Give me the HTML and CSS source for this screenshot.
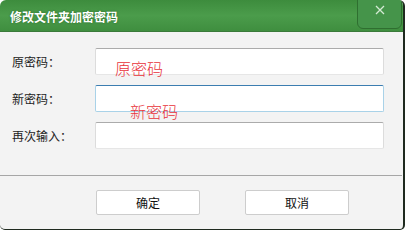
FILE: index.html
```html
<!DOCTYPE html>
<html lang="zh">
<head>
  <meta charset="UTF-8" />
  <title>修改文件夹加密密码</title>
  <link rel="stylesheet" href="styles.css">
</head>
<body>
  <div class="dialog">
    <!-- Başlık çubuğu -->
    <div class="title-bar">
      <span class="title">修改文件夹加密密码</span>
      <button class="close-btn">
        <svg width="10" height="10" viewBox="0 0 10 10">
          <path d="M1 1 L9 9 M9 1 L1 9" stroke="#d4ead4" stroke-width="1.3" fill="none"/>
        </svg>
      </button>
    </div>

    <div class="form">
      <div class="row">
        <label>原密码：</label>
        <input type="password" class="field">
      </div>
      <div class="row">
        <label>新密码：</label>
        <input type="password" class="field focus">
      </div>
      <div class="row">
        <label>再次输入：</label>
        <input type="password" class="field">
      </div>
      <!-- Kırmızı ipucu yazıları -->
      <span class="hint hint-old">原密码</span>
      <span class="hint hint-new">新密码</span>
    </div>

    <div class="separator"></div>

    <div class="buttons">
      <button class="btn">确定</button>
      <button class="btn">取消</button>
    </div>
  </div>
</body>
</html>
```

FILE: styles.css
```css
body {
  margin: 0;
  background: #ffffff;
  font-family: "Noto Sans CJK SC", "Noto Sans", sans-serif;
}
.dialog {
  width: 403px;
  height: 229px;
  background: #f3f3f3;
  border-right: 2px solid #1f2a1f;
  border-bottom: 1px solid #1f2a1f;
  border-radius: 6px 6px 5px 5px;
  overflow: hidden;
  position: relative;
}
/* Yeşil başlık */
.title-bar {
  height: 31px;
  display: flex;
  align-items: center;
  justify-content: space-between;
  background: linear-gradient(#3d8c3d, #4b9c4b 50%, #3f8e3f);
  border-bottom: 1px solid #3a7a3a;
  position: relative;
}
.title {
  color: #ffffff;
  font-size: 12px;
  font-weight: bold;
  margin-left: 10px;
  margin-top: 2px;
  text-shadow: 0 0 2px rgba(0,60,0,0.5);
}
.close-btn {
  position: absolute;
  top: -1px;
  right: 1px;
  width: 45px;
  height: 30px;
  background: #45944a;
  border: 1px solid #2f6f30;
  border-radius: 0 0 6px 6px;
  padding: 0 0 9px 0;
  display: flex;
  align-items: center;
  justify-content: center;
  cursor: pointer;
}
.form {
  position: relative;
  display: flex;
  flex-direction: column;
  gap: 10px;
  padding: 16px 0 0 0;
  height: 127px;
}
.row {
  display: flex;
  align-items: center;
  height: 27px;
}
.row label {
  width: 95px;
  padding-left: 12px;
  box-sizing: border-box;
  font-size: 12px;
  color: #222222;
}
.field {
  width: 289px;
  height: 27px;
  box-sizing: border-box;
  background: #ffffff;
  border: 1px solid #dcdcdc;
  border-top-color: #ababab;
  border-bottom-color: #e6e6e6;
  border-radius: 2px;
  outline: none;
}
.field.focus {
  border-color: #a9d2e8;
  border-top-color: #3c7db0;
}
/* Kırmızı yazılar */
.hint {
  position: absolute;
  color: #e8323a;
  font-size: 16px;
  line-height: 16px;
  font-weight: 300;
}
.hint-old {
  left: 115px;
  top: 28px;
}
.hint-new {
  left: 130px;
  top: 71px;
}
.separator {
  height: 1px;
  background: #a6a6a6;
  margin-right: 1px;
}
.buttons {
  display: flex;
  gap: 45px;
  padding: 14px 0 0 96px;
}
.btn {
  width: 104px;
  height: 25px;
  background: #ffffff;
  border: 1px solid #cdcdcd;
  border-radius: 2px;
  font-family: "Noto Sans CJK SC", sans-serif;
  font-size: 12px;
  color: #111111;
  padding: 0;
  cursor: pointer;
}
```
